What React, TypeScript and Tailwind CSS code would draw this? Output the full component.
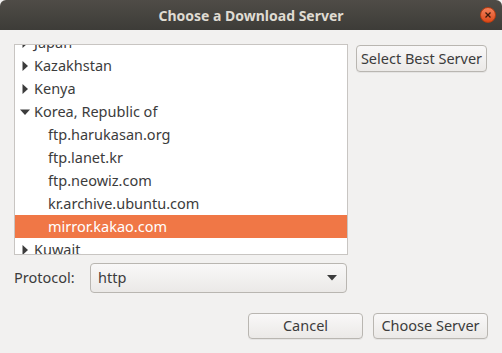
import { useState } from "react";

const countries = [
  { name: "Japan", open: false },
  { name: "Kazakhstan", open: false },
  { name: "Kenya", open: false },
  {
    name: "Korea, Republic of",
    open: true,
    mirrors: [
      "ftp.harukasan.org",
      "ftp.lanet.kr",
      "ftp.neowiz.com",
      "kr.archive.ubuntu.com",
      "mirror.kakao.com",
    ],
  },
  { name: "Kuwait", open: false },
];

const Arrow = ({ open }: { open: boolean }) =>
  open ? (
    <svg width="10" height="10" viewBox="0 0 10 10" className="shrink-0">
      <path d="M0 2.5h10L5 8z" fill="#3c3c3c" />
    </svg>
  ) : (
    <svg width="10" height="10" viewBox="0 0 10 10" className="shrink-0">
      <path d="M2.5 0v10L8 5z" fill="#3c3c3c" />
    </svg>
  );

const Button = ({ children, className = "" }: { children: React.ReactNode; className?: string }) => (
  <button
    className={
      "flex items-center justify-center rounded-[4px] border border-[#b9b6b1] bg-gradient-to-b from-[#f9f8f8] to-[#ebe9e7] text-[#3c3c3c] shadow-[0_1px_0_rgba(0,0,0,0.05)] " +
      className
    }
  >
    {children}
  </button>
);

export default function App() {
  const [selected] = useState("mirror.kakao.com");

  return (
    <div className="w-[502px] h-[353px] bg-[#f2f1f0] font-['Noto_Sans',sans-serif] text-[14.5px] text-[#3c3c3c] flex flex-col overflow-hidden">
      <div className="h-[30px] shrink-0 rounded-t-[6px] bg-gradient-to-b from-[#4f4c47] to-[#3d3c38] flex items-center justify-center relative">
        <span className="font-bold text-[#dfdbd2] text-[14px]">Choose a Download Server</span>
        <div className="absolute right-[6px] top-[7px] w-[16px] h-[16px] rounded-full bg-gradient-to-b from-[#f4815a] to-[#dd4814] border border-[#b93d11] flex items-center justify-center">
          <svg width="8" height="8" viewBox="0 0 8 8">
            <path d="M1.5 1.5l5 5M6.5 1.5l-5 5" stroke="#3a1a0c" strokeWidth="1.3" />
          </svg>
        </div>
      </div>

      <div className="flex-1 flex flex-col px-[14px] pt-[14px]">
        <div className="flex gap-[8px]">
          <div className="w-[334px] h-[211px] border border-[#c8c5c2] bg-white overflow-hidden">
            <div className="mt-[-14px]">
              {countries.map((c) => (
                <div key={c.name}>
                  <div className="h-[23px] flex items-center pl-[5px] gap-[3px]">
                    <Arrow open={c.open} />
                    <span className="pl-[1px]">{c.name}</span>
                  </div>
                  {c.open &&
                    c.mirrors?.map((m) => (
                      <div
                        key={m}
                        className={
                          "h-[23px] flex items-center pl-[33px] " +
                          (m === selected ? "bg-[#f07746] text-white" : "")
                        }
                      >
                        {m}
                      </div>
                    ))}
                </div>
              ))}
            </div>
          </div>
          <div className="pt-[1px]">
            <Button className="w-[131px] h-[27px]">Select Best Server</Button>
          </div>
        </div>

        <div className="flex items-center mt-[8px]">
          <span className="w-[76px] pb-[1px]">Protocol:</span>
          <div className="w-[257px] h-[30px] rounded-[4px] border border-[#b9b6b1] bg-gradient-to-b from-[#f9f8f8] to-[#ebe9e7] flex items-center justify-between pl-[7px] pr-[9px]">
            <span>http</span>
            <svg width="10" height="6" viewBox="0 0 10 6">
              <path d="M0 0h10L5 5.5z" fill="#3c3c3c" />
            </svg>
          </div>
        </div>

        <div className="flex justify-end gap-[10px] mt-[20px]">
          <Button className="w-[115px] h-[26px]">Cancel</Button>
          <Button className="w-[115px] h-[26px]">Choose Server</Button>
        </div>
      </div>
    </div>
  );
}
